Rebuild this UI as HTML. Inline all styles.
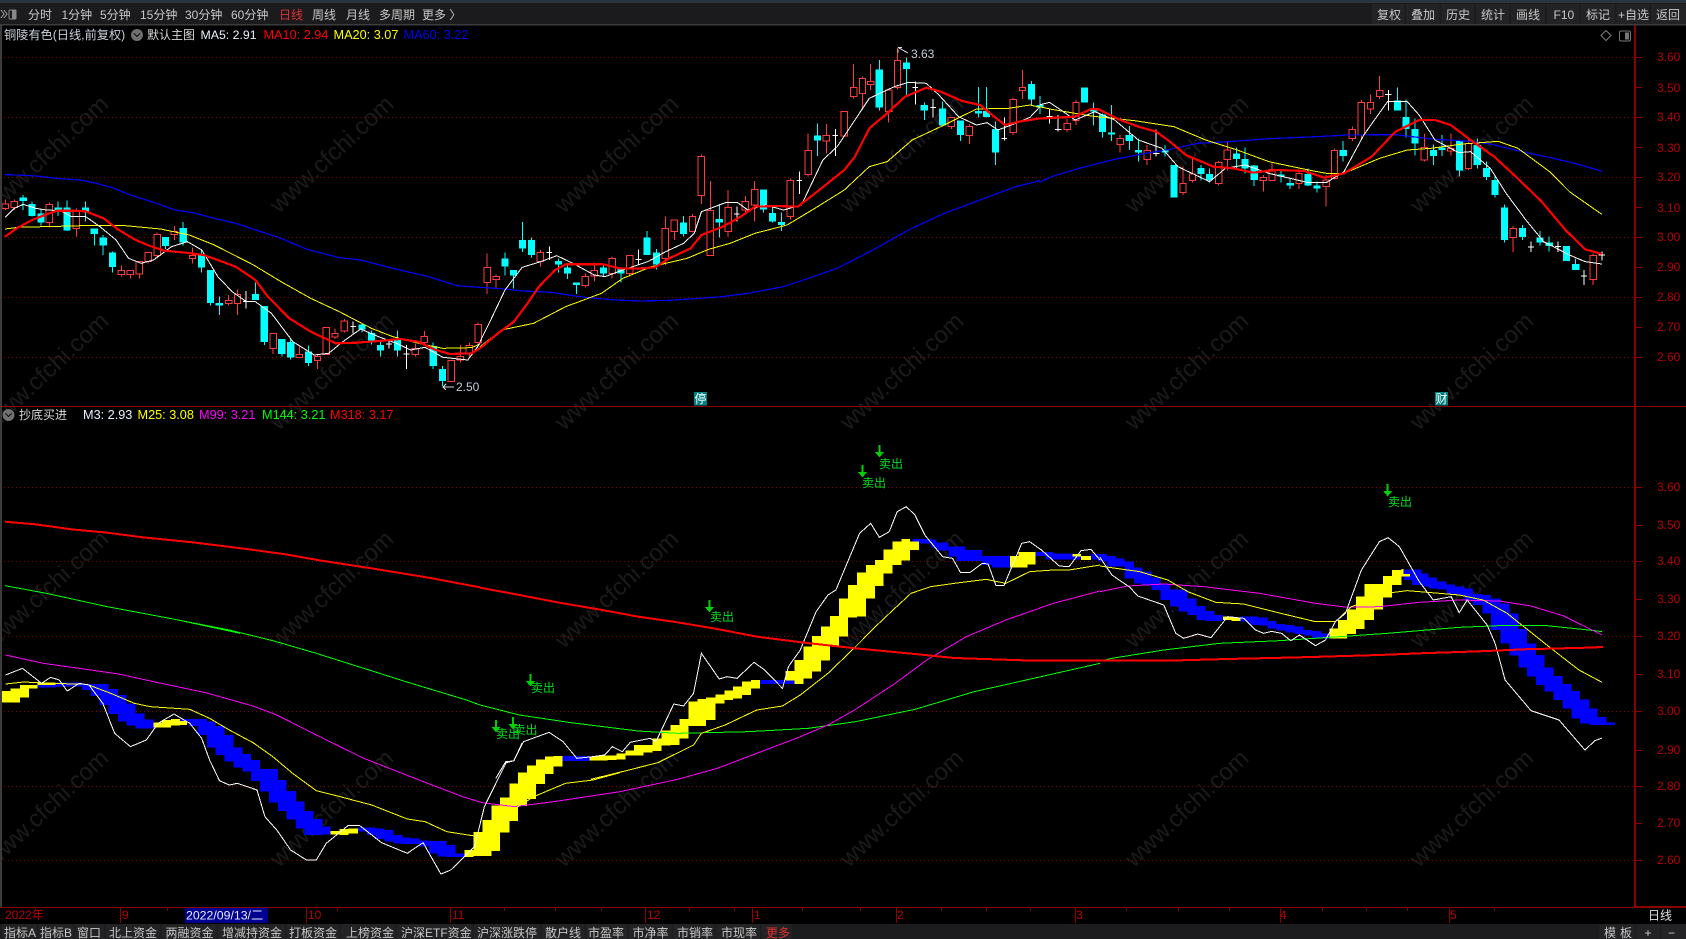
<!DOCTYPE html>
<html><head><meta charset="utf-8"><title>铜陵有色</title>
<style>
html,body{margin:0;padding:0;background:#000;width:1686px;height:939px;overflow:hidden}
svg{display:block}
text{font-family:"Liberation Sans","Noto Sans CJK SC",sans-serif;font-size:12px}
path,polyline{vector-effect:non-scaling-stroke;shape-rendering:crispEdges}
polyline{fill:none}
.wm text{font-size:24px;fill:#1b1b1b;text-anchor:middle}
.g{stroke:#8c0000;stroke-width:1;stroke-dasharray:1 3}
.t text{fill:#c8c8c8}
.ax text{fill:#b80000}
.s text{fill:#00e020}
.s path{fill:#00d000}
.v{font-size:12.7px}
.rw{stroke:#ff3c3c;fill:none}.rb{stroke:#ff3c3c;fill:#000}
.cw{stroke:#00ffff;fill:none}.cb{fill:#00ffff}
.ww{stroke:#fff;fill:none}
.W{stroke:#fff;stroke-width:1}.Y{stroke:#ff0;stroke-width:1}.B{stroke:#00f;stroke-width:1.2}.R{stroke:#f00;stroke-width:2.2}.M{stroke:#f0f;stroke-width:1}.G{stroke:#0f0;stroke-width:1}.R2{stroke:#f00;stroke-width:2}
.by{fill:#ff0}.bb{fill:#0000ff}
</style></head><body>
<svg width="1686" height="939" viewBox="0 0 1686 939" xmlns="http://www.w3.org/2000/svg">
<rect width="1686" height="939" fill="#000"/>
<g class="wm">
<text transform="translate(52 160) rotate(-43)">www.cfchi.com</text><text transform="translate(337 160) rotate(-43)">www.cfchi.com</text><text transform="translate(622 160) rotate(-43)">www.cfchi.com</text><text transform="translate(907 160) rotate(-43)">www.cfchi.com</text><text transform="translate(1192 160) rotate(-43)">www.cfchi.com</text><text transform="translate(1477 160) rotate(-43)">www.cfchi.com</text>
<text transform="translate(52 377) rotate(-43)">www.cfchi.com</text><text transform="translate(337 377) rotate(-43)">www.cfchi.com</text><text transform="translate(622 377) rotate(-43)">www.cfchi.com</text><text transform="translate(907 377) rotate(-43)">www.cfchi.com</text><text transform="translate(1192 377) rotate(-43)">www.cfchi.com</text><text transform="translate(1477 377) rotate(-43)">www.cfchi.com</text>
<text transform="translate(52 595) rotate(-43)">www.cfchi.com</text><text transform="translate(337 595) rotate(-43)">www.cfchi.com</text><text transform="translate(622 595) rotate(-43)">www.cfchi.com</text><text transform="translate(907 595) rotate(-43)">www.cfchi.com</text><text transform="translate(1192 595) rotate(-43)">www.cfchi.com</text><text transform="translate(1477 595) rotate(-43)">www.cfchi.com</text>
<text transform="translate(52 814) rotate(-43)">www.cfchi.com</text><text transform="translate(337 814) rotate(-43)">www.cfchi.com</text><text transform="translate(622 814) rotate(-43)">www.cfchi.com</text><text transform="translate(907 814) rotate(-43)">www.cfchi.com</text><text transform="translate(1192 814) rotate(-43)">www.cfchi.com</text><text transform="translate(1477 814) rotate(-43)">www.cfchi.com</text>
</g>
<!-- grid -->
<path class="g" d="M4 57.5H1634M4 117.5H1634M4 177.5H1634M4 237.5H1634M4 297.5H1634M4 357.5H1634M4 487.5H1634M4 561.5H1634M4 636.5H1634M4 711.5H1634M4 786.5H1634M4 860.5H1634"/>

<!-- candles part 1 -->
<g transform="translate(0 160) scale(.35714 .33333)">
<path class="rw" d="M15 118V150M40 118V150M138 128V203M214 145V230M340 316V350M365 331V356M390 305V356M415 277V310M440 218V295M488 198V240M539 263V310M640 405V437M665 388V465M765 520V582M838 560V592M889 585V627M913 502V585M938 505V537M964 477V518M1163 550V590M1188 513V550M1264 601V664M1289 555V607M1314 548V590M1339 487V558"/>
<path class="rb" d="M6 132h18V145h-18zM31 124h18V143h-18zM129 133h18V188h-18zM205 153h18V205h-18zM331 331h18V343h-18zM356 332h18V343h-18zM381 305h18V342h-18zM406 277h18V305h-18zM431 223h18V287h-18zM479 215h18V223h-18zM530 287h18V296h-18zM631 421h18V430h-18zM656 404h18V430h-18zM756 520h18V565h-18zM829 583h18V592h-18zM880 590h18V601h-18zM904 502h18V584h-18zM929 520h18V531h-18zM955 483h18V513h-18zM1154 565h18V583h-18zM1179 530h18V547h-18zM1255 601h18V664h-18zM1280 590h18V600h-18zM1305 557h18V582h-18zM1330 493h18V548h-18z"/>
<path class="cw" d="M65 105V150M90 125V170M115 148V197M163 124V168M188 122V213M239 124V185M264 205V257M289 225V285M315 275V338M463 231V267M513 186V257M564 272V338M589 330V437M614 410V465M715 367V420M740 438V555M789 537V590M814 537V598M864 556V618M1014 490V518M1040 512V553M1065 545V590M1113 512V590M1213 548V627M1239 618V680"/>
<path class="cb" d="M55 113h20V123h-20zM80 132h20V168h-20zM105 160h20V187h-20zM153 143h20V153h-20zM178 142h20V212h-20zM229 142h20V157h-20zM254 205h20V222h-20zM279 232h20V257h-20zM305 277h20V321h-20zM453 231h20V258h-20zM503 204h20V247h-20zM554 284h20V322h-20zM579 330h20V429h-20zM604 429h20V437h-20zM705 402h20V420h-20zM730 438h20V546h-20zM779 537h20V582h-20zM804 546h20V592h-20zM854 574h20V609h-20zM1004 493h20V508h-20zM1030 519h20V543h-20zM1055 555h20V572h-20zM1103 540h20V572h-20zM1203 558h20V618h-20zM1229 627h20V663h-20z"/>
<path class="ww" d="M689 393V445M681 425h16M989 485V520M981 500h16M1089 540V565M1081 552h16M1138 555V627M1130 582h16"/>
</g>
<!-- candles part 2 -->
<g transform="translate(480 30) scale(.35714 .33333)">
<path class="rw" d="M20 670V792M45 733V775M169 660V710M295 730V773M320 697V755M370 680V745M419 675V738M519 560V705M544 568V630M595 552V607M620 373V522M645 453V677M695 480V620M743 498V550M769 453V575M869 445V568M919 310V440M970 282V370M1020 243V320M1046 102V206M1071 140V240M1094 102V180M1144 180V278M1169 52V178M1320 262V297M1370 282V342M1493 203V315"/>
<path class="rb" d="M11 712h18V757h-18zM36 740h18V748h-18zM160 667h18V695h-18zM286 740h18V767h-18zM311 722h18V738h-18zM361 685h18V730h-18zM410 677h18V730h-18zM510 595h18V685h-18zM535 570h18V605h-18zM586 559h18V605h-18zM611 379h18V497h-18zM636 541h18V677h-18zM686 532h18V605h-18zM734 514h18V540h-18zM760 478h18V525h-18zM860 451h18V560h-18zM910 361h18V434h-18zM961 316h18V333h-18zM1011 244h18V318h-18zM1037 172h18V199h-18zM1062 145h18V190h-18zM1085 154h18V163h-18zM1135 180h18V245h-18zM1160 91h18V173h-18zM1311 262h18V290h-18zM1361 289h18V317h-18zM1484 209h18V307h-18z"/>
<path class="cw" d="M70 667V737M94 720V775M119 576V666M144 622V683M220 685V728M245 703V747M270 757V792M346 700V740M395 717V757M468 603V675M494 657V718M570 558V620M670 522V622M794 478V548M819 533V577M844 548V603M945 280V378M1118 90V242M1194 82V195M1244 217V270M1295 215V290M1345 272V333M1396 171V262M1418 171V262M1443 275V405"/>
<path class="cb" d="M60 685h20V710h-20zM84 720h20V737h-20zM109 630h20V656h-20zM134 630h20V675h-20zM210 693h20V703h-20zM235 712h20V730h-20zM260 757h20V765h-20zM336 712h20V730h-20zM385 717h20V730h-20zM458 622h20V675h-20zM484 667h20V703h-20zM560 577h20V612h-20zM660 567h20V577h-20zM784 478h20V539h-20zM809 549h20V575h-20zM834 576h20V585h-20zM935 316h20V332h-20zM1108 118h20V233h-20zM1184 98h20V117h-20zM1234 225h20V242h-20zM1285 235h20V287h-20zM1335 272h20V315h-20zM1386 243h20V251h-20zM1408 243h20V261h-20zM1433 297h20V368h-20z"/>
<path class="ww" d="M194 650V690M186 668h16M444 658V705M436 688h16M719 530V575M711 552h16M894 424V492M886 452h16M995 297V378M987 316h16M1219 155V224M1211 172h16M1269 207V262M1261 233h16M1468 262V332M1460 325h16"/>
</g>
<!-- candles part 3 -->
<g transform="translate(1000 60) scale(.39541 .33333)">
<path class="rw" d="M57 30V117M170 175V216M192 120V195M304 225V278M372 255V315M463 320V405M487 295V367M553 303V377M575 247V332M666 345V395M688 308V362M756 335V387M825 345V440M846 265V358M891 200V243M914 120V235M937 103V162M960 48V117M1073 220V305M1140 220V287M1185 235V330M1298 498V576M1500 580V675"/>
<path class="rb" d="M49 82h16V92h-16zM162 190h16V208h-16zM184 127h16V182h-16zM296 235h16V253h-16zM364 272h16V298h-16zM455 371h16V398h-16zM479 342h16V362h-16zM545 308h16V371h-16zM567 270h16V298h-16zM658 353h16V361h-16zM680 328h16V362h-16zM748 340h16V370h-16zM817 360h16V380h-16zM838 271h16V355h-16zM883 208h16V236h-16zM906 127h16V225h-16zM929 127h16V147h-16zM952 91h16V109h-16zM1065 262h16V300h-16zM1132 265h16V273h-16zM1177 250h16V326h-16zM1290 505h16V533h-16zM1492 586h16V658h-16z"/>
<path class="cw" d="M80 63V135M101 108V162M214 82V127M237 127V197M259 160V233M282 135V243M327 198V270M350 235V305M417 255V290M440 315V413M508 315V362M530 325V368M598 262V330M620 262V340M643 315V378M711 333V368M734 352V387M779 325V378M802 365V397M868 243V305M1005 82V152M1027 118V233M1050 175V287M1096 253V315M1118 225V288M1162 243V350M1207 235V325M1230 305V360M1252 350V413M1276 433V548M1321 495V540M1366 513V557M1389 530V575M1433 558V603M1456 595V630"/>
<path class="cb" d="M71 72h18V118h-18zM92 135h18V142h-18zM205 82h18V127h-18zM228 150h18V155h-18zM250 163h18V216h-18zM273 217h18V224h-18zM318 225h18V243h-18zM341 270h18V278h-18zM408 270h18V278h-18zM431 315h18V413h-18zM499 324h18V342h-18zM521 342h18V360h-18zM589 280h18V297h-18zM611 297h18V325h-18zM634 316h18V360h-18zM702 343h18V350h-18zM725 369h18V377h-18zM770 342h18V377h-18zM793 377h18V386h-18zM859 270h18V288h-18zM996 122h18V152h-18zM1018 171h18V207h-18zM1041 207h18V251h-18zM1087 270h18V288h-18zM1109 262h18V270h-18zM1153 243h18V332h-18zM1198 255h18V315h-18zM1221 324h18V351h-18zM1243 360h18V405h-18zM1267 442h18V540h-18zM1312 504h18V531h-18zM1357 532h18V548h-18zM1380 548h18V558h-18zM1424 558h18V603h-18zM1447 612h18V630h-18z"/>
<path class="ww" d="M125 148V190M117 170h16M147 165V215M139 208h16M395 208V290M387 281h16M1343 545V576M1335 561h16M1411 545V576M1403 560h16M982 90V152M974 103h16M1477 630V675M1469 648h16M1522 575V602M1514 585h16"/>
</g>

<!-- MA lines upper -->
<g transform="translate(0 160) scale(.35714 .33333)">
<polyline class="B" points="14,44 50,45 100,48 170,56 225,60 270,70 320,85 365,105 430,127 490,150 540,158 600,175 660,190 710,208 780,232 860,268 950,293 1010,300 1100,325 1200,350 1280,377 1344,382"/>
<polyline class="Y" points="14,207 60,201 130,200 230,197 350,197 450,207 530,225 600,255 710,315 790,367 870,415 950,455 1040,505 1100,530 1180,552 1240,565 1320,563 1344,552"/>
<polyline class="W" points="14,172 40,145 65,133 100,145 130,150 170,152 200,170 240,170 280,200 325,240 360,295 395,310 430,300 480,260 525,245 565,270 610,350 650,395 690,425 715,425 760,460 820,545 880,585 920,580 960,545 1010,507 1060,530 1110,550 1150,570 1190,562 1240,592 1310,600 1344,550"/>
<polyline class="R" points="14,230 50,203 90,180 130,163 160,152 200,152 240,154 290,175 330,208 380,240 420,258 460,272 520,278 570,285 610,300 660,320 715,360 750,410 810,475 870,515 940,550 1000,548 1060,543 1120,537 1170,545 1220,570 1260,582 1320,580 1344,565"/>
</g>
<g transform="translate(480 30) scale(.35714 .33333)">
<polyline class="B" points="0,772 60,776 120,783 200,787 260,797 300,803 380,810 450,813 530,811 600,806 680,800 750,790 850,770 920,745 1000,715 1100,660 1200,600 1300,550 1400,510 1500,470 1568,452"/>
<polyline class="Y" points="0,950 60,900 150,880 240,830 340,790 400,745 480,710 580,685 640,658 700,640 770,610 860,585 930,540 1020,480 1090,410 1140,395 1210,330 1300,285 1390,237 1480,235 1540,225 1568,232"/>
<polyline class="W" points="0,935 30,870 70,780 118,712 170,695 215,677 260,700 320,735 350,740 400,720 470,695 520,665 570,640 600,610 620,545 690,517 720,517 750,540 800,525 850,540 900,525 960,390 1000,350 1090,205 1160,170 1200,157 1250,160 1285,195 1340,260 1390,285 1420,278 1450,300 1500,280 1540,262 1568,230"/>
<polyline class="R" points="0,955 50,910 95,875 130,825 165,770 210,720 240,703 300,703 345,703 390,715 440,716 490,712 530,685 590,655 620,615 680,590 730,560 770,530 830,528 890,530 950,480 1020,420 1050,380 1090,295 1140,250 1190,200 1250,173 1290,185 1350,213 1400,225 1440,260 1470,285 1510,275 1568,265"/>
</g>
<g transform="translate(1000 60) scale(.39541 .33333)">
<polyline class="B" points="100,367 130,350 200,325 290,298 360,282 430,268 500,250 580,245 680,236 800,230 880,225 1000,224 1100,238 1180,243 1240,252 1320,275 1400,295 1460,312 1522,334"/>
<polyline class="Y" points="100,140 130,148 230,168 340,182 440,200 520,240 600,270 680,305 780,330 830,341 870,340 960,295 1030,270 1090,265 1170,252 1260,244 1310,265 1390,335 1440,395 1522,463"/>
<polyline class="W" points="100,135 125,127 160,155 190,180 240,155 290,180 350,240 410,265 450,320 530,365 570,325 620,315 680,340 780,368 825,368 870,335 920,225 980,125 1030,125 1060,165 1100,240 1160,278 1190,275 1240,325 1280,400 1330,480 1375,545 1440,585 1480,605 1522,612"/>
<polyline class="R" points="100,176 110,175 190,170 230,147 250,148 300,178 350,200 395,215 430,245 470,285 540,320 590,325 640,338 700,330 770,333 820,353 870,340 940,290 1000,215 1060,180 1100,180 1140,195 1190,240 1250,290 1300,345 1370,425 1430,510 1480,568 1522,582"/>
</g>
<path d="M898 47.5L908 53M898 47.5h4M898 49.5v3" stroke="#d0d8e0" fill="none"/>
<path d="M443 387h11M443 387l3-3M443 387l3 3" stroke="#d0d8e0" fill="none"/>
<text x="911" y="58" style="fill:#c0ccd8">3.63</text>
<text x="456" y="391" style="fill:#c0ccd8">2.50</text>
<rect x="694" y="392" width="13" height="13.5" fill="#008080"/><text x="694.5" y="403" style="fill:#fff;font-size:12px">停</text>
<rect x="1435" y="392" width="13" height="13.5" fill="#008080"/><text x="1435.5" y="403" style="fill:#fff;font-size:12px">财</text>

<!-- Lower band -->
<g transform="translate(0 620) scale(.39541 .33333)">
<path class="bb" d="M73 195H140V202H73zM140 188H207V200H140zM207 192H230V210H207zM230 192H252V228H230zM252 192H275V255H252zM275 207H298V282H275zM298 225H320V305H298zM320 250H343V317H320zM343 280H365V325H343zM365 298H388V325H365zM455 297H478V305H455zM478 297H500V318H478zM500 297H523V345H500zM523 305H545V383H523zM545 318H568V405H545zM568 345H590V425H568zM590 382H613V442H590zM613 402H635V455H613zM635 420H658V483H635zM658 447H680V515H658zM680 447H703V547H680zM703 480H725V573H703zM725 513H748V598H725zM748 545H770V625H748zM770 573H793V645H770zM793 597H815V645H793zM815 620H836V643H815zM905 623H928V635H905zM928 623H950V645H928zM950 625H973V657H950zM973 630H995V665H973zM995 645H1018V670H995zM1018 652H1040V672H1018zM1040 655H1062V672H1040zM1062 662H1085V680H1062zM1085 663H1107V700H1085zM1107 663H1129V710H1107zM1129 675H1152V711H1129zM1152 700H1175V711H1152zM1423 408H1446V423H1423z"/>
<path class="by" d="M5 213H27V248H5zM27 205H50V248H27zM50 195H73V232H50zM73 195H95V205H73zM95 187H140V195H95zM388 308H410V323H388zM410 300H433V323H410zM433 297H455V316H433zM455 303H473V315H455zM836 633H858V643H836zM858 627H881V645H858zM881 625H905V640H881zM1175 690H1198V711H1175zM1198 636H1220V708H1198zM1220 600H1243V708H1220zM1243 557H1265V693H1243zM1265 533H1288V638H1265zM1288 490H1310V603H1288zM1310 458H1333V558H1310zM1333 437H1355V537H1333zM1355 418H1378V492H1355zM1378 410H1400V462H1378zM1400 408H1423V440H1400z"/>
</g>
<g transform="translate(480 430) scale(.39541 .33333)">
<path class="bb" d="M209 978H277V993H209zM708 750H795V762H708zM1094 327H1140V340H1094zM1140 328H1155V352H1140zM1155 338H1185V362H1155zM1185 350H1205V380H1185zM1205 350H1228V393H1205zM1228 360H1270V393H1228zM1270 378H1295V405H1270zM1295 378H1340V413H1295zM1405 366H1430V378H1405zM1430 366H1450V388H1430zM1450 370H1498V388H1450zM1498 372H1520V388H1498zM1545 372H1568V388H1545z"/>
<path class="by" d="M277 980H300V992H277zM300 977H323V992H300zM323 977H345V990H323zM345 970H368V988H345zM368 962H390V977H368zM390 945H413V977H390zM413 945H436V968H413zM436 925H459V963H436zM459 902H482V947H459zM482 885H505V945H482zM505 867H527V925H505zM527 815H550V888H527zM550 807H572V888H550zM572 802H595V870H572zM595 793H618V820H595zM618 782H640V810H618zM640 770H663V805H640zM663 755H685V795H663zM685 750H708V775H685zM772 723H795V752H772zM795 690H818V762H795zM818 650H840V745H818zM840 618H863V725H840zM863 590H885V692H863zM885 558H908V650H885zM908 505H931V620H908zM931 465H953V562H931zM953 427H976V560H953zM976 405H999V505H976zM999 390H1020V468H999zM1020 358H1043V430H1020zM1043 335H1066V405H1043zM1066 327H1088V392H1066zM1088 335H1110V360H1088zM1340 378H1362V413H1340zM1362 366H1385V413H1362zM1385 366H1405V403H1385zM1498 372H1520V380H1498zM1520 378H1545V390H1520z"/>
</g>
<g transform="translate(1060 470) scale(.3992 .33333)">
<path class="bb" d="M95 252H118V275H95zM118 258H140V290H118zM140 265H162V290H140zM162 275H185V325H162zM185 292H207V340H185zM207 305H229V345H207zM229 322H252V360H229zM252 340H275V390H252zM275 358H297V410H275zM297 358H320V425H297zM320 385H342V435H320zM342 408H364V450H342zM364 423H387V453H364zM387 435H408V453H387zM452 440H475V455H452zM475 440H497V465H475zM497 443H520V467H497zM520 453H542V475H520zM542 462H565V482H542zM565 465H587V487H565zM587 470H610V492H587zM610 480H632V497H610zM632 483H655V505H632zM655 490H675V505H655zM860 298H882V330H860zM882 298H905V345H882zM905 310H923V350H905zM923 322H945V355H923zM945 335H968V358H945zM968 343H990V372H968zM990 350H1013V377H990zM1013 355H1035V390H1013zM1035 372H1058V405H1035zM1058 375H1080V430H1058zM1080 385H1103V480H1080zM1103 400H1126V520H1103zM1126 430H1148V557H1126zM1148 477H1170V593H1148zM1170 520H1192V620H1170zM1192 555H1214V645H1192zM1214 592H1236V665H1214zM1236 618H1259V690H1236zM1259 642H1281V715H1259zM1281 663H1303V745H1281zM1303 688H1326V760H1303zM1326 715H1347V765H1326zM1347 741H1369V765H1347zM1369 757H1390V765H1369z"/>
<path class="by" d="M408 440H430V450H408zM430 443H452V453H430zM675 475H697V505H675zM697 450H719V505H697zM719 418H741V492H719zM741 380H763V477H741zM763 342H786V450H763zM786 342H809V418H786zM809 318H832V383H809zM832 300H855V345H832zM855 297H860V320H855zM855 312H877V320H855z"/>
</g>

<!-- Lower lines -->
<g transform="translate(0 620) scale(.39541 .33333)">
<polyline class="G" points="450,0 580,30 690,62 800,100 920,145 1040,190 1180,240 1214,255"/>
<polyline class="M" points="14,105 110,130 230,150 300,162 400,188 520,218 640,258 700,285 800,345 920,415 1060,480 1170,530 1220,548 1300,560 1400,545 1568,515"/>
<polyline class="Y" points="14,192 60,186 130,190 220,193 280,220 340,250 380,260 480,268 530,295 580,330 640,368 690,410 740,460 800,512 860,530 940,555 1030,597 1075,605 1130,635 1200,648 1225,640 1310,560 1350,530 1430,490 1500,480 1568,458"/>
<polyline class="W" points="14,165 57,145 105,190 128,172 150,180 170,213 200,190 225,195 260,250 290,340 330,380 370,360 400,310 440,282 480,310 510,355 530,420 555,482 580,495 600,490 650,510 670,590 700,630 735,690 775,720 800,720 825,670 880,617 910,617 965,668 1030,700 1070,668 1115,762 1140,750 1200,680 1225,560 1280,428 1300,422 1320,370"/>
</g>
<g transform="translate(0 380) scale(.35714 .33333)">
<polyline class="G" points="14,617 130,640 300,680 490,718 672,760"/>
<polyline class="R2" points="14,425 100,433 200,448 300,458 400,472 540,487 690,507 800,523 900,542 1040,565 1200,593 1344,622"/>
</g>
<g transform="translate(480 430) scale(.39541 .33333)">
<polyline class="G" points="0,825 100,855 230,878 400,903 500,910 680,905 830,895 950,875 1100,838 1250,785 1400,745 1568,700"/>
<polyline class="M" points="354,1085 500,1048 600,1015 700,970 800,925 880,885 950,838 1050,760 1130,690 1230,620 1330,570 1450,520 1568,483"/>
<polyline class="Y" points="280,1048 370,1022 450,998 540,945 560,910 620,885 700,840 765,828 810,795 880,730 950,650 1000,590 1040,545 1090,490 1140,470 1200,460 1280,448 1330,460 1390,425 1450,420 1490,420 1568,405"/>
<polyline class="W" points="40,1045 65,995 85,993 110,935 175,907 210,935 245,985 285,980 315,975 335,950 360,965 380,937 430,925 445,935 490,822 515,828 540,790 560,670 605,747 625,740 650,745 693,697 720,720 765,775 780,710 810,660 850,545 880,495 900,480 960,310 988,280 1010,322 1035,305 1055,245 1078,230 1100,255 1125,315 1170,380 1195,385 1215,427 1240,427 1270,400 1285,402 1305,467 1325,467 1370,340 1390,335 1420,360 1465,408 1490,410 1520,362 1545,358 1568,390"/>
<polyline class="R2" points="0,473 100,495 200,518 300,538 400,560 500,577 600,597 700,620 820,638 950,655 1100,672 1200,684 1300,688 1400,692 1568,692"/>
</g>
<g transform="translate(1060 470) scale(.3992 .33333)">
<polyline class="G" points="100,573 130,565 260,540 400,520 550,512 700,500 820,490 1000,472 1100,467 1220,467 1340,482 1358,485"/>
<polyline class="M" points="100,365 170,348 260,342 360,350 500,370 640,400 720,412 800,410 900,397 1000,390 1100,393 1180,408 1260,437 1358,495"/>
<polyline class="Y" points="100,288 140,295 200,305 270,330 320,365 390,397 460,402 560,432 640,455 690,455 730,410 830,368 870,362 950,370 1000,375 1060,390 1120,430 1230,535 1300,600 1358,637"/>
<polyline class="W" points="100,262 130,315 175,352 195,378 260,405 290,490 310,505 345,492 378,503 420,440 460,445 490,480 510,490 530,484 555,490 578,512 600,495 640,527 665,510 690,455 715,430 755,300 800,215 822,203 850,230 900,335 935,390 980,380 1000,428 1020,390 1070,465 1090,520 1115,630 1180,722 1250,750 1315,840 1340,812 1358,804"/>
<polyline class="R2" points="100,572 300,571 420,567 600,562 800,555 900,550 1050,544 1160,538 1320,533 1360,531"/>
</g>

<!-- Sell signals -->
<g class="s">
<path d="M878.5 445h2v7h3.5l-4.500 5.500l-4.500-5.500h3.500z"/><text x="879" y="468">卖出</text>
<path d="M861.500 465h2v7h3.500l-4.500 5.500l-4.500-5.500h3.500z"/><text x="862" y="487">卖出</text>
<path d="M708.500 600h2v7h3.500l-4.500 5.500l-4.500-5.500h3.500z"/><text x="710" y="621">卖出</text>
<path d="M529.500 674h2v7h3.500l-4.500 5.500l-4.500-5.500h3.500z"/><text x="531" y="692">卖出</text>
<path d="M512 717h2v7h3.500l-4.500 5.500l-4.500-5.500h3.500z"/><text x="513.500" y="734">卖出</text>
<path d="M495 720h2v7h3.500l-4.500 5.500l-4.500-5.500h3.500z"/><text x="496" y="738">卖出</text>
<path d="M1386.700 484h2v7h3.500l-4.500 5.500l-4.500-5.500h3.500z"/><text x="1388" y="506">卖出</text>
</g>

<!-- frame lines -->
<rect x="0" y="25" width="2" height="882" fill="#3c3c3c"/>
<rect x="1634" y="25" width="2" height="882" fill="#8b0000"/>
<rect x="2" y="406" width="1684" height="1" fill="#8b0000"/>
<rect x="0" y="907" width="1686" height="1" fill="#8b0000"/>
<rect x="1636" y="906" width="50" height="2" fill="#8b0000"/>
<path stroke="#8b0000" fill="none" d="M1636 57.500h6M1636 87.500h6M1636 117.500h6M1636 147.500h6M1636 177.500h6M1636 207.500h6M1636 237.500h6M1636 267.500h6M1636 297.500h6M1636 327.500h6M1636 357.500h6M1636 487.500h6M1636 525.500h6M1636 561.500h6M1636 599.500h6M1636 636.500h6M1636 674.500h6M1636 711.500h6M1636 750.500h6M1636 786.500h6M1636 823.500h6M1636 860.500h6"/>

<!-- Axis labels -->
<g class="ax">
<text x="1657" y="61">3.60</text><text x="1657" y="92">3.50</text><text x="1657" y="121">3.40</text><text x="1657" y="152">3.30</text><text x="1657" y="181">3.20</text><text x="1657" y="212">3.10</text><text x="1657" y="241">3.00</text><text x="1657" y="271">2.90</text><text x="1657" y="301">2.80</text><text x="1657" y="331">2.70</text><text x="1657" y="361">2.60</text>
<text x="1657" y="491">3.60</text><text x="1657" y="529">3.50</text><text x="1657" y="565">3.40</text><text x="1657" y="603">3.30</text><text x="1657" y="640">3.20</text><text x="1657" y="678">3.10</text><text x="1657" y="715">3.00</text><text x="1657" y="754">2.90</text><text x="1657" y="790">2.80</text><text x="1657" y="827">2.70</text><text x="1657" y="864">2.60</text>
<text x="5" y="919">2022年</text>
<text x="122" y="919">9</text><text x="308" y="919">10</text><text x="452" y="919">11</text><text x="647" y="919">12</text><text x="754" y="919">1</text><text x="897" y="919">2</text><text x="1076" y="919">3</text><text x="1280" y="919">4</text><text x="1450" y="919">5</text>
</g>
<path stroke="#8b0000" fill="none" d="M120.500 908v15M306.500 908v15M450.500 908v15M645.500 908v15M752.500 908v15M896.500 908v15M1075.500 908v15M1280.500 908v15M1449.500 908v15M167.500 908v3M266.500 908v3M337.500 908v3M504.500 908v3M555.500 908v3M601.500 908v3M689.500 908v3M734.500 908v3M802.500 908v3M860.500 908v3M941.500 908v3M986.500 908v3M1030.500 908v3M1126.500 908v3M1178.500 908v3M1229.500 908v3M1322.500 908v3M1366.500 908v3M1407.500 908v3M1494.500 908v3"/>
<rect x="185" y="908" width="83" height="15" fill="#000090"/>
<text x="186" y="919.500" style="fill:#e8ecff;font-size:12.3px">2022/09/13/二</text>
<text x="1648" y="919.500" style="fill:#e0e0e0">日线</text>

<!-- Top bar -->
<rect x="0" y="0" width="1686" height="24" fill="#1b1b1d"/>
<rect x="0" y="0" width="1686" height="3" fill="#2c3440"/>
<rect x="0" y="24" width="1686" height="1.500" fill="#3c3c3c"/>
<path d="M1 10l3 4-3 4M4 10l3 4-3 4" stroke="#999" fill="none"/>
<rect x="9" y="10" width="7" height="9" rx="1" fill="none" stroke="#888"/><rect x="12" y="10.500" width="4" height="8" fill="#888"/>
<g class="t">
<text x="28" y="19">分时</text><text x="61.500" y="19">1分钟</text><text x="100" y="19">5分钟</text><text x="140" y="19">15分钟</text><text x="185" y="19">30分钟</text><text x="231" y="19">60分钟</text><text x="279" y="19" style="fill:#e03030">日线</text><text x="312" y="19">周线</text><text x="346" y="19">月线</text><text x="379" y="19">多周期</text><text x="422" y="19">更多 〉</text>
</g>
<path fill="#232325" d="M1372 4h32.500v20h-32.500zM1406 4h33.500v20h-33.500zM1441 4h33.500v20h-33.500zM1476 4h33.500v20h-33.500zM1511 4h34v20h-34zM1546.500 4h33v20h-33zM1581 4h34v20h-34zM1616.500 4h33v20h-33zM1651 4h35v20h-35z"/>
<g class="t">
<text x="1377" y="19">复权</text><text x="1411" y="19">叠加</text><text x="1446" y="19">历史</text><text x="1481" y="19">统计</text><text x="1516" y="19">画线</text><text x="1553.500" y="19">F10</text><text x="1586" y="19">标记</text><text x="1618" y="19">+自选</text><text x="1656" y="19">返回</text>
</g>

<!-- Top right icons -->
<path d="M1606 30.500l5 5-5 5-5-5z" fill="none" stroke="#777"/>
<rect x="1619.500" y="31" width="11" height="10" rx="1.500" fill="none" stroke="#777"/><rect x="1625" y="32.500" width="4" height="7" fill="#777"/>

<!-- Upper header -->
<text x="4" y="39" style="fill:#c8d0d8;font-size:12.2px">铜陵有色(日线,前复权)</text>
<circle cx="137" cy="35" r="6" fill="#707070"/><path d="M134 33.500l3 3 3-3" stroke="#111" stroke-width="1.200" fill="none"/>
<text x="147" y="39" style="fill:#d8d8d8">默认主图</text>
<text x="200.500" y="39" style="fill:#e8f0ff;font-size:12.3px">MA5: 2.91</text>
<text x="263.500" y="39" class="v" style="fill:#f00">MA10: 2.94</text>
<text x="333.500" y="39" class="v" style="fill:#ff0">MA20: 3.07</text>
<text x="403.500" y="39" class="v" style="fill:#0000f0">MA60: 3.22</text>

<!-- Lower header -->
<circle cx="8.500" cy="415" r="6" fill="#707070"/><path d="M5.500 413.500l3 3 3-3" stroke="#111" stroke-width="1.200" fill="none"/>
<text x="19" y="419" style="fill:#d8d8d8">抄底买进</text>
<text x="83" y="419" class="v" style="fill:#e8f0ff">M3: 2.93</text>
<text x="137.500" y="419" class="v" style="fill:#ff0">M25: 3.08</text>
<text x="199" y="419" class="v" style="fill:#f0f">M99: 3.21</text>
<text x="262" y="419" class="v" style="fill:#0f0">M144: 3.21</text>
<text x="330" y="419" class="v" style="fill:#f00">M318: 3.17</text>

<!-- Bottom bar -->
<rect x="0" y="924" width="1686" height="15" fill="#1c1c1e"/>
<path fill="#232325" d="M2 924h35v15H2zM38.500 924h35v15h-35zM75 924h29v15H75zM105.500 924h55v15h-55zM162 924h54.500v15H162zM218 924h67v15h-67zM286.500 924h53v15h-53zM341 924h54.500v15H341zM397 924h75.500v15H397zM474 924h66.500v15H474zM542 924h42.500v15H542zM586 924h41.500v15H586zM629 924h42.500v15H629zM673 924h41.500v15H673zM716 924h44v15H716zM761.500 924h30v15h-30zM1599.500 924h35v15h-35zM1636 924h24v15h-24zM1661 924h25v15h-25z"/>
<g class="t">
<text x="4" y="937">指标A</text><text x="40" y="937">指标B</text><text x="77" y="937">窗口</text><text x="109" y="937">北上资金</text><text x="165.500" y="937">两融资金</text><text x="222" y="937">增减持资金</text><text x="289" y="937">打板资金</text><text x="346" y="937">上榜资金</text><text x="401" y="937">沪深ETF资金</text><text x="477" y="937">沪深涨跌停</text><text x="545" y="937">散户线</text><text x="588" y="937">市盈率</text><text x="632.500" y="937">市净率</text><text x="677" y="937">市销率</text><text x="721" y="937">市现率</text><text x="766" y="937" style="fill:#e03030">更多</text>
<text x="1604" y="937">模</text><text x="1620" y="937">板</text><text x="1644.500" y="937">+</text><text x="1668" y="937">−</text>
</g>
</svg>
</body></html>
